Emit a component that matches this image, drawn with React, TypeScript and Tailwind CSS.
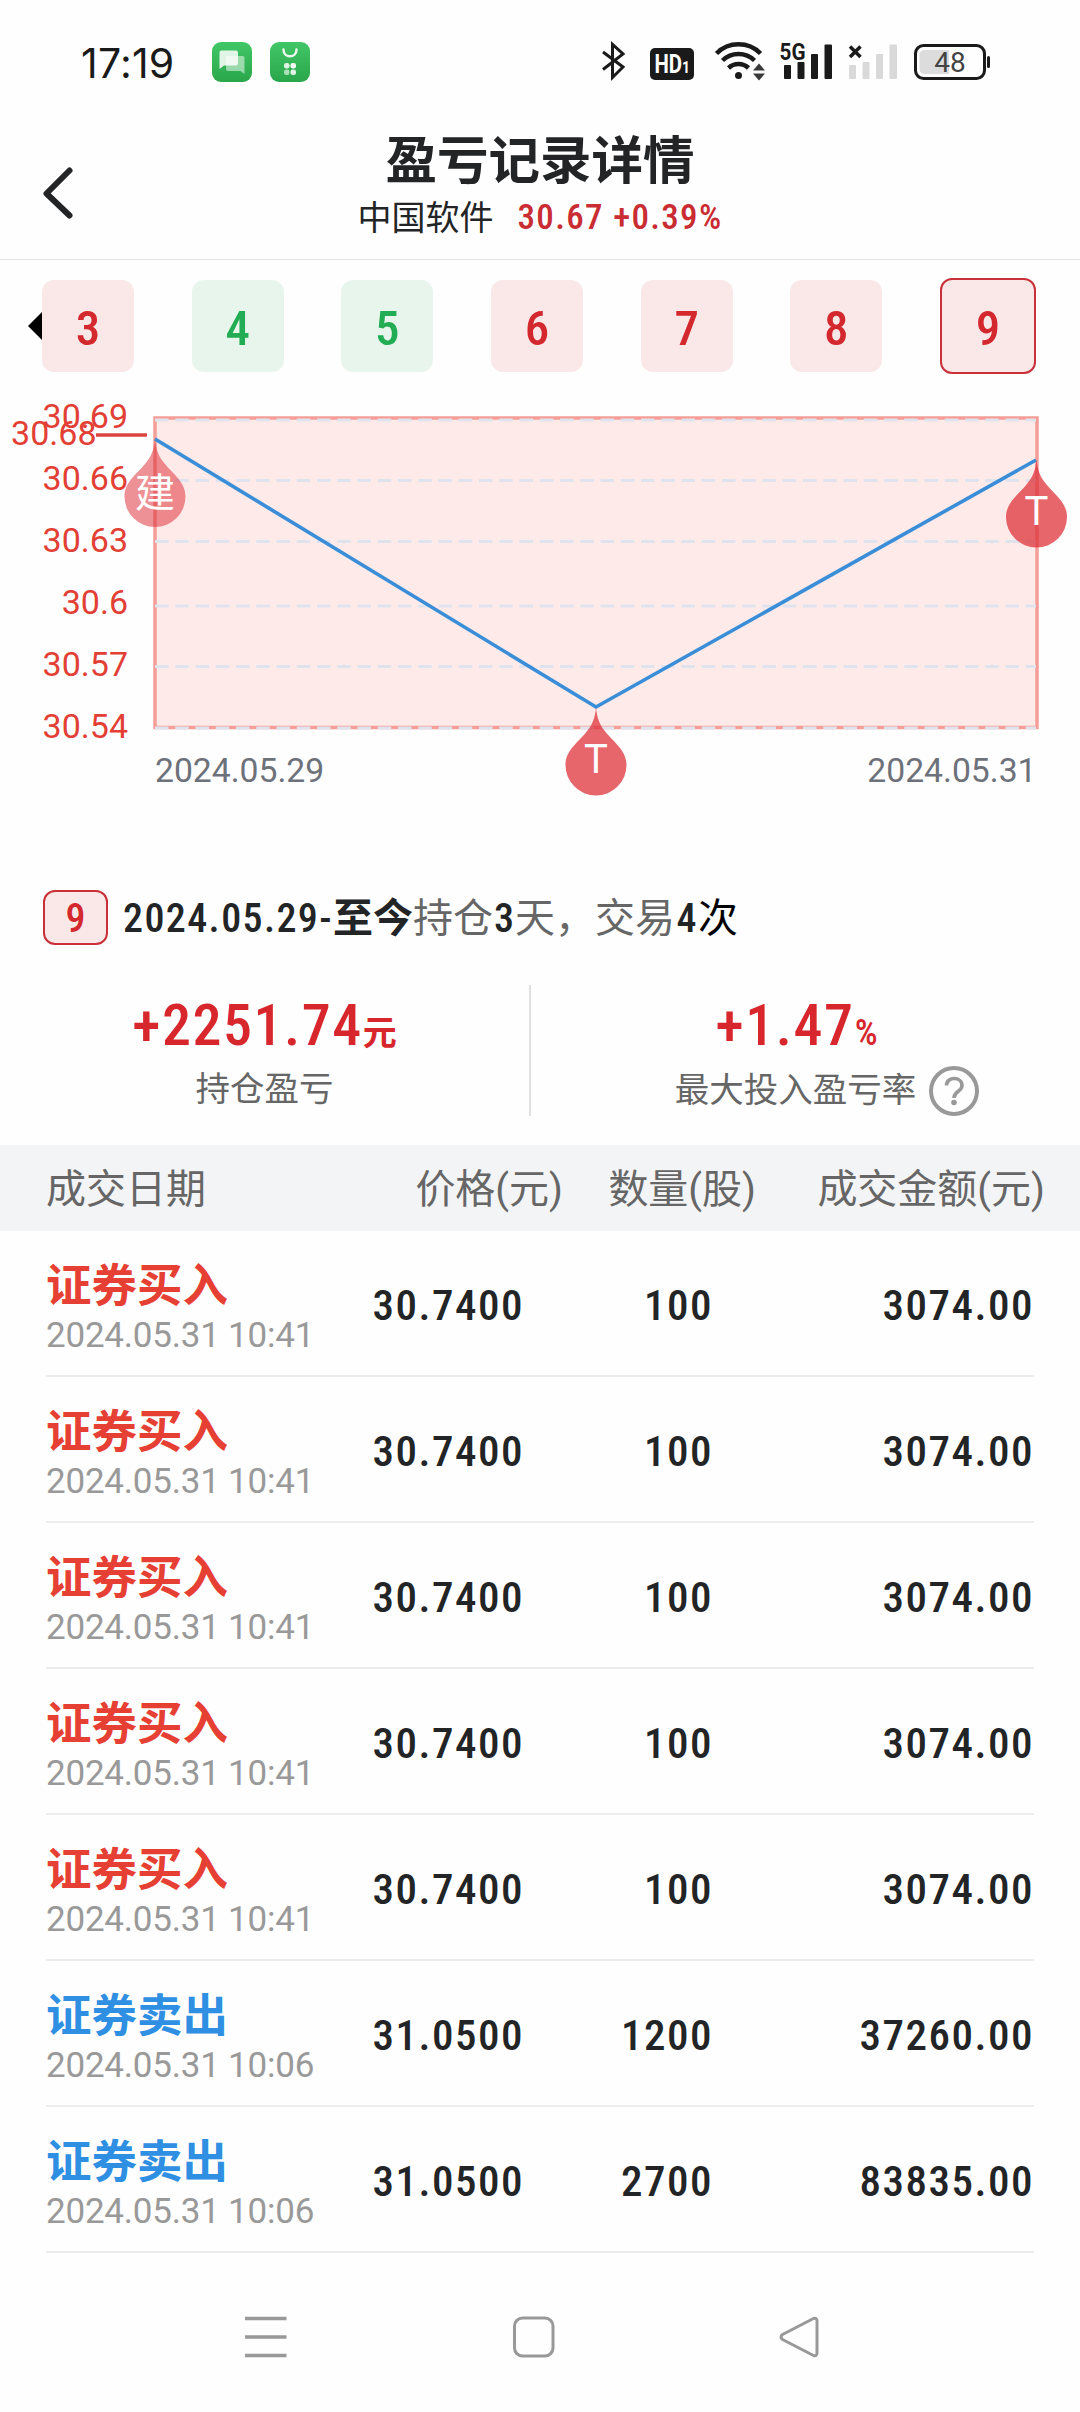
import clsx from "clsx"

interface Trade {
  side: "buy" | "sell"
  time: string
  price: string
  quantity: string
  amount: string
}

const rounds = [
  { label: "3", profit: true },
  { label: "4", profit: false },
  { label: "5", profit: false },
  { label: "6", profit: true },
  { label: "7", profit: true },
  { label: "8", profit: true },
  { label: "9", profit: true, active: true },
]

const trades: Trade[] = [
  { side: "buy", time: "2024.05.31 10:41", price: "30.7400", quantity: "100", amount: "3074.00" },
  { side: "buy", time: "2024.05.31 10:41", price: "30.7400", quantity: "100", amount: "3074.00" },
  { side: "buy", time: "2024.05.31 10:41", price: "30.7400", quantity: "100", amount: "3074.00" },
  { side: "buy", time: "2024.05.31 10:41", price: "30.7400", quantity: "100", amount: "3074.00" },
  { side: "buy", time: "2024.05.31 10:41", price: "30.7400", quantity: "100", amount: "3074.00" },
  { side: "sell", time: "2024.05.31 10:06", price: "31.0500", quantity: "1200", amount: "37260.00" },
  { side: "sell", time: "2024.05.31 10:06", price: "31.0500", quantity: "2700", amount: "83835.00" },
]

const axisLabels = [
  { text: "30.69", y: 48 },
  { text: "30.66", y: 110 },
  { text: "30.63", y: 171.5 },
  { text: "30.6", y: 233.5 },
  { text: "30.57", y: 295.5 },
  { text: "30.54", y: 358 },
]

const gridLines = [40, 100.5, 161.5, 226, 286.5, 348]

function StatusBar() {
  return (
    <div className="flex h-[124px] items-center pl-[81px] pr-[89px]">
      <span className="w-[131px] pt-[2px] font-['Inter'] text-[41px] leading-none tracking-[0.2px] text-[#1a1a1a]">17:19</span>

      {/* Notification icons */}
      <div className="flex gap-[18px]">
        <svg width="40" height="40" viewBox="0 0 40 40">
          <defs>
            <linearGradient id="green" x1="0" y1="0" x2="0" y2="1">
              <stop offset="0" stopColor="#41c767" />
              <stop offset="1" stopColor="#2aa64b" />
            </linearGradient>
          </defs>
          <rect width="40" height="40" rx="9" fill="url(#green)" />
          <path d="M14 14h16.500q2 0 2 2v16l-4-3h-12.500q-2 0-2-2z" fill="#fff" fillOpacity="0.5" />
          <path d="M9.500 8.500h14.500q2 0 2 2v11q0 2-2 2h-12l-4.500 3.500v-16.500q0-2 2-2z" fill="#fff" fillOpacity="0.85" />
        </svg>
        <svg width="40" height="40" viewBox="0 0 40 40">
          <rect width="40" height="40" rx="9" fill="url(#green)" />
          <path d="M13.500 7.500c0 9 13 9 13 0" fill="none" stroke="#fff" strokeOpacity="0.9" strokeWidth="2.500" strokeLinecap="round" />
          <rect x="14" y="21" width="5.500" height="5.500" rx="2.200" fill="#fff" fillOpacity="0.85" />
          <rect x="20.500" y="21" width="5.500" height="5.500" rx="2.200" fill="#fff" fillOpacity="0.95" />
          <rect x="14" y="27.500" width="5.500" height="5.500" rx="2.200" fill="#fff" fillOpacity="0.6" />
          <rect x="20.500" y="27.500" width="5.500" height="5.500" rx="2.200" fill="#fff" fillOpacity="0.85" />
        </svg>
      </div>

      {/* Connectivity and battery */}
      <svg className="ml-auto" width="390" height="60" viewBox="0 -8 390 60">
        <path d="M2 12l20 15-10.500 10.500v-33l10.500 9.500-20 15.500" fill="none" stroke="#1a1a1a" strokeWidth="3" />
        <rect x="49" y="8" width="44" height="32" rx="5" fill="#1a1a1a" />
        <text x="53.500" y="33" fill="#fff" fontFamily="Roboto" fontSize="25" fontWeight="700" textLength="35.500" lengthAdjust="spacingAndGlyphs">
          HD<tspan fontSize="17">1</tspan>
        </text>

        <g fill="none" stroke="#1a1a1a" strokeWidth="4.500">
          <path d="M115.500 13.500a31 31 0 0 1 44 0" />
          <path d="M121.500 20.500a23 23 0 0 1 32 0" />
          <path d="M127.500 28a14.500 14.500 0 0 1 20 0" />
        </g>
        <circle cx="137.500" cy="35.500" r="3.500" fill="#1a1a1a" />
        <path d="M152 30.500l6-7 6 7zM152 33.500l6 7 6-7z" fill="#3a3a3a" />

        <text x="178.500" y="20" fill="#1a1a1a" fontFamily="Roboto" fontSize="24" fontWeight="700" textLength="26" lengthAdjust="spacingAndGlyphs">5G</text>
        <g fill="#1a1a1a">
          <rect x="183" y="25" width="7" height="14" rx="1" />
          <rect x="196.500" y="22" width="7" height="17" rx="1" />
          <rect x="210" y="14" width="7" height="25" rx="1" />
          <rect x="223.500" y="4.500" width="7.500" height="34.500" rx="1" />
        </g>
        <path d="M249 6.500l10.500 10.500M259.500 6.500l-10.500 10.500" stroke="#1a1a1a" strokeWidth="3.500" />
        <g fill="#d9d9d9">
          <rect x="248" y="25" width="7" height="14" rx="1" />
          <rect x="261.500" y="22" width="7" height="17" rx="1" />
          <rect x="275" y="14" width="7" height="25" rx="1" />
          <rect x="288.500" y="4.500" width="7.500" height="34.500" rx="1" />
        </g>

        <rect x="314.500" y="5.500" width="69" height="33" rx="8" fill="none" stroke="#1a1a1a" strokeWidth="3" />
        <path d="M324 10h24v24h-24q-5.500 0-5.500-5.500v-13q0-5.500 5.500-5.500z" fill="#dcdcdc" />
        <rect x="386" y="16" width="3" height="12" rx="1.500" fill="#1a1a1a" />
        <text x="349" y="32" textAnchor="middle" fill="#444" fontFamily="Roboto" fontSize="28">48</text>
      </svg>
    </div>
  )
}

function Header() {
  return (
    <header className="flex h-[136px] border-b border-[#e5e5e5]">
      <div className="w-[180px] pl-[42px] pt-[42px]">
        <svg width="32" height="54" viewBox="0 0 32 54" fill="none" stroke="#222426" strokeWidth="6" strokeLinecap="round" strokeLinejoin="round">
          <path d="M27.500 4.500L4.500 27.500l23 22" />
        </svg>
      </div>
      <div className="flex flex-1 flex-col items-center pt-[8px]">
        <h1 className="text-[51.500px] font-bold leading-[60px] text-[#222426]">盈亏记录详情</h1>
        <div className="mt-[6px] flex items-center gap-6 text-[34px] leading-[40px] text-[#222426]">
          <span>中国软件</span>
          <span className="text-[35px] font-medium tracking-[1.3px] text-[#c92c32] [font-stretch:85%]">30.67 +0.39%</span>
        </div>
      </div>
      <div className="w-[180px]" />
    </header>
  )
}

function RoundTabs() {
  return (
    <div className="flex h-[132px] items-center pl-[28px] pr-[44px]">
      <svg width="14" height="28" viewBox="0 0 14 28">
        <path d="M14 0v28L0 14z" fill="#000" />
      </svg>
      <div className="flex flex-1 items-center justify-between">
        {rounds.map((round) => (
          <div
            key={round.label}
            className={clsx(
              "flex items-center justify-center rounded-[12px] pt-[4px] text-[49px] font-medium leading-none [font-stretch:85%]",
              round.profit ? "bg-[#fae8e8] text-[#d3282e]" : "bg-[#e8f5ec] text-[#22ad54]",
              round.active ? "h-24 w-24 border-2 border-[#c93037]" : "h-[92px] w-[92px]"
            )}
          >
            {round.label}
          </div>
        ))}
      </div>
    </div>
  )
}

function Pin({ x, y, label, faded }: { x: number; y: number; label: string; faded?: boolean }) {
  return (
    <g transform={`translate(${x} ${y})`}>
      <path
        d="M0 0C1 11 4 18 10 25C18 35 30.500 43 30.500 57.500A30.500 30.500 0 0 1-30.500 57.500C-30.500 43-18 35-10 25C-4 18-1 11 0 0z"
        fill="#dd3038"
        fillOpacity={faded ? 0.53 : 0.74}
      />
      <text y={faded ? 67.5 : 65} textAnchor="middle" fill="#fff" fontSize="40">
        {label}
      </text>
    </g>
  )
}

function PriceChart() {
  return (
    <svg
      className="block font-['Roboto','Noto_Sans_CJK_SC',sans-serif]"
      width="1080"
      height="480"
      viewBox="0 0 1080 480"
    >
      <rect x="155" y="38" width="882" height="309.500" fill="#feeae9" stroke="#f59d97" strokeWidth="3.500" />

      {/* Grid */}
      {gridLines.map((y) => (
        <line key={y} x1="155" x2="1036" y1={y} y2={y} stroke="#dfe3ee" strokeWidth="3" strokeDasharray="13.500 6.750" />
      ))}

      {/* Price axis */}
      <g fill="#e23f35" fontSize="34" textAnchor="end">
        {axisLabels.map((label) => (
          <text key={label.text} x="128" y={label.y}>
            {label.text}
          </text>
        ))}
        <text x="96.500" y="64.500">30.68</text>
      </g>
      <line x1="96" x2="147" y1="55" y2="55" stroke="#dc453d" strokeWidth="3.500" />

      <polyline points="155,59 596,327 1036,80" fill="none" stroke="#3a8ed8" strokeWidth="3.600" />

      <Pin x={155} y={59} label="建" faded />
      <Pin x={596} y={327.5} label="T" />
      <Pin x={1036.5} y={79.5} label="T" />

      {/* Date axis */}
      <g fill="#6d717a" fontSize="33.700">
        <text x="155" y="401.500">2024.05.29</text>
        <text x="1036.500" y="401.500" textAnchor="end">2024.05.31</text>
      </g>
    </svg>
  )
}

function Summary() {
  return (
    <section>
      <div className="flex h-[90px] items-center pl-[43px] text-[40px] leading-none text-[#666]">
        <span className="mr-[15px] flex h-[55px] w-[65px] items-center justify-center rounded-[12px] border-2 border-[#c93037] bg-[#fae8e8] pt-1 font-medium text-[#d3282e] [font-stretch:85%]">
          9
        </span>
        <div className="flex pt-[3px]">
          <span className="font-medium tracking-[1.4px] text-[#222426] [font-stretch:85%]">2024.05.29-</span>
          <span className="font-bold text-[#222426]">至今</span>
          <span>持仓</span>
          <span className="w-[22px] text-center font-medium text-[#222426] [font-stretch:85%]">3</span>
          <span>天，交易</span>
          <span className="w-[23px] text-center font-medium text-[#222426] [font-stretch:85%]">4</span>
          <span className="text-black">次</span>
        </div>
      </div>

      <div className="flex h-[183px] pt-[23px]">
        <div className="flex h-[131px] w-[531px] flex-col items-center border-r-2 border-[#e0e0e0]">
          <div className="flex h-[80px] items-baseline font-medium text-[#d7262c] [font-stretch:85%]">
            <span className="text-[58px] leading-[80px] tracking-[1.5px]">+2251.74</span>
            <span className="text-[34px] font-bold">元</span>
          </div>
          <div className="text-[34.500px] leading-[48px] text-[#666]">持仓盈亏</div>
        </div>
        <div className="flex h-[131px] flex-1 flex-col items-center">
          <div className="flex h-[80px] items-baseline pr-[18px] font-medium text-[#d7262c] [font-stretch:85%]">
            <span className="text-[58px] leading-[80px] tracking-[1.6px]">+1.47</span>
            <span className="text-[36px]">%</span>
          </div>
          <div className="flex items-center gap-[13px] pl-[43px] text-[34.500px] leading-[46px] text-[#666]">
            <span className="-mt-[2px]">最大投入盈亏率</span>
            <svg className="mt-px" width="50" height="50" viewBox="0 0 50 50" fill="none" stroke="#999">
              <circle cx="25" cy="25" r="23" strokeWidth="4" />
              <path d="M17.500 19.500c0-9.500 15.500-9 15.500 0 0 6-8 5.500-8 12.500" strokeWidth="3.600" />
              <circle cx="25" cy="36.500" r="2.800" fill="#999" stroke="none" />
            </svg>
          </div>
        </div>
      </div>
    </section>
  )
}

function TradeTable() {
  return (
    <section>
      <div className="flex h-[86px] items-center bg-[#f3f4f6] pl-[46px] pr-[35px] pt-[3px] text-[40px] leading-none text-[#666]">
        <span className="w-[317px]">成交日期</span>
        <span className="w-[200px] text-right">价格(元)</span>
        <span className="w-[193px] text-right">数量(股)</span>
        <span className="flex-1 text-right">成交金额(元)</span>
      </div>
      {trades.map((trade, index) => (
        <div key={index} className="mx-[46px] flex h-[146px] border-b-2 border-[#ededed]">
          <div className="w-[317px] pt-[28px]">
            <div
              className={clsx(
                "text-[45.500px] font-bold leading-[56px]",
                trade.side === "buy" ? "text-[#e63f34]" : "text-[#2f8fe2]"
              )}
            >
              {trade.side === "buy" ? "证券买入" : "证券卖出"}
            </div>
            <div className="text-[35px] leading-[42px] tracking-[-0.22px] text-[#999]">{trade.time}</div>
          </div>
          <div className="flex flex-1 pt-[44px] text-[43px] font-medium leading-[60px] tracking-[1.5px] text-[#222426] [font-stretch:85%]">
            <span className="w-[161px] text-right">{trade.price}</span>
            <span className="w-[189px] text-right">{trade.quantity}</span>
            <span className="flex-1 text-right">{trade.amount}</span>
          </div>
        </div>
      ))}
    </section>
  )
}

function NavigationBar() {
  return (
    <nav className="flex flex-1 pt-[62px] pl-[245px]">
      <svg className="mr-[226px]" width="42" height="44" viewBox="0 0 42 44" stroke="#999" strokeWidth="3.500">
        <path d="M0 3.500h41.500M0 22h41.500M0 40.500h41.500" />
      </svg>
      <svg className="mr-[222px]" width="42" height="44" viewBox="0 0 42 44" fill="none" stroke="#999" strokeWidth="3">
        <rect x="1.500" y="3" width="38.500" height="38" rx="8" />
      </svg>
      <svg width="44" height="44" viewBox="0 0 44 44" fill="none" stroke="#999" strokeWidth="3" strokeLinejoin="round">
        <path d="M36.500 3.500L5.500 19.500q-3 2.500 0 5L36.500 40.500q3.500 1 3.500-2.500V6q0-3.500-3.500-2.500z" />
      </svg>
    </nav>
  )
}

export default function App() {
  return (
    <div className="flex h-[2412px] w-[1080px] flex-col overflow-hidden bg-[#fefefe] font-['Roboto','Noto_Sans_CJK_SC',sans-serif]">
      <StatusBar />
      <Header />
      <RoundTabs />
      {/* Chart starts slightly under the tabs */}
      <div className="-mt-3">
        <PriceChart />
      </div>
      <div className="mt-[12px]">
        <Summary />
      </div>
      <TradeTable />
      <NavigationBar />
    </div>
  )
}
